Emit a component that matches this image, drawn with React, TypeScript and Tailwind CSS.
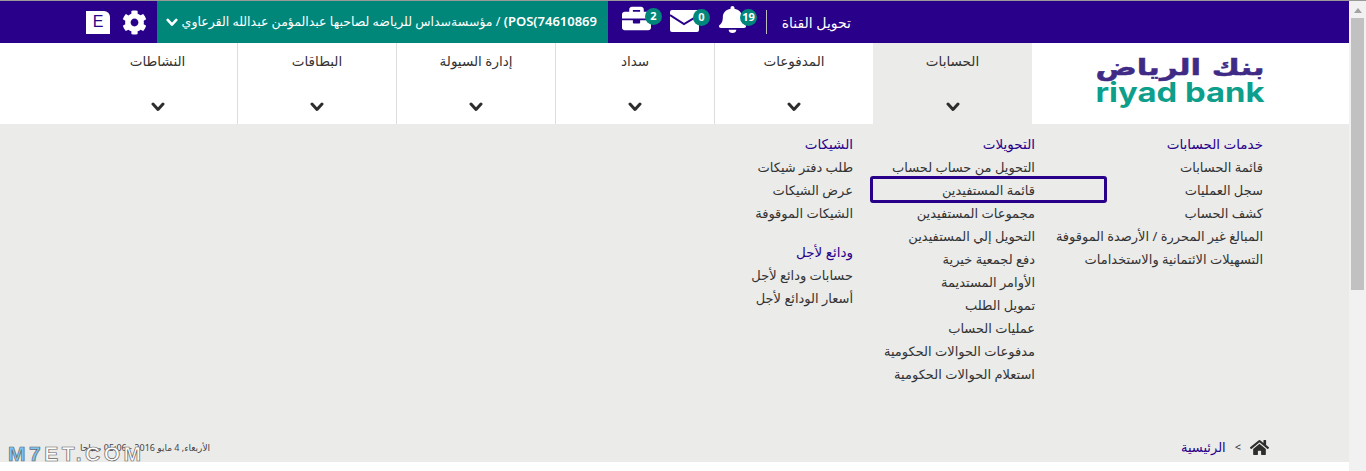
import { FaBell, FaBriefcase, FaCog, FaHome } from "react-icons/fa";

const navItems = ["الحسابات", "المدفوعات", "سداد", "إدارة السيولة", "البطاقات", "النشاطات"];

const accounts = ["قائمة الحسابات", "سجل العمليات", "كشف الحساب", "المبالغ غير المحررة / الأرصدة الموقوفة", "التسهيلات الائتمانية والاستخدامات"];
const transfers = ["التحويل من حساب لحساب", "قائمة المستفيدين", "مجموعات المستفيدين", "التحويل إلي المستفيدين", "دفع لجمعية خيرية", "الأوامر المستديمة", "تمويل الطلب", "عمليات الحساب", "مدفوعات الحوالات الحكومية", "استعلام الحوالات الحكومية"];
const cheques = ["طلب دفتر شيكات", "عرض الشيكات", "الشيكات الموقوفة"];
const deposits = ["حسابات ودائع لأجل", "أسعار الودائع لأجل"];

function Badge({ n, className }: { n: string; className: string }) {
  return (
    <span className={`absolute right-[-11px] flex h-[17px] w-[17px] items-center justify-center rounded-full bg-[#00877a] text-[11px] font-bold text-white ${className}`}>
      {n}
    </span>
  );
}

function Chevron({ className }: { className: string }) {
  return (
    <svg viewBox="0 0 14 10" className={className} fill="none" stroke="currentColor" strokeWidth="3" strokeLinecap="round" strokeLinejoin="round">
      <polyline points="2,2 7,7.5 12,2" />
    </svg>
  );
}

function Envelope() {
  return (
    <svg width="29" height="22" viewBox="0 0 29 22" className="block">
      <rect width="29" height="22" rx="2" fill="#fff" />
      <polyline points="0,5 14,14 29,5" fill="none" stroke="#29008a" strokeWidth="2" />
    </svg>
  );
}

function Group({ title, items, highlight }: { title: string; items: string[]; highlight?: string }) {
  return (
    <div>
      <div className="h-[24px] text-[13.5px] leading-[24px] text-[#29008a]">{title}</div>
      {items.map((t) => (
        <div key={t} className="relative h-[23px] whitespace-nowrap text-[13px] leading-[23px] text-[#333]">
          {t}
          {t === highlight && (
            <span className="absolute bottom-[-1px] left-[17px] right-[-72px] top-[-3px] rounded-[3px] border-[3px] border-[#29008a]" />
          )}
        </div>
      ))}
    </div>
  );
}

export default function App() {
  return (
    <div className="flex h-[471px] w-full overflow-hidden bg-white font-['Noto_Sans','DejaVu_Sans',sans-serif]" dir="ltr">
      <div className="flex w-[1349px] shrink-0 flex-col" dir="rtl">
        <div className="h-px bg-[#999]" />
        <header className="flex h-[42px] items-center bg-[#29008a] text-white">
          <div className="w-[498px] shrink-0" />
          <div className="w-[84px] shrink-0 text-[14px]">تحويل القناة</div>
          <div className="h-6 w-px shrink-0 bg-[#bbb]" />
          <div className="mr-[20px] flex shrink-0 items-center">
            <span className="relative mb-[5px]"><FaBell preserveAspectRatio="none" className="h-[27px] w-[27px]" /><Badge n="19" className="top-[3px]" /></span>
            <span className="relative mb-[2px] mr-[20px]"><Envelope /><Badge n="0" className="top-[-1px]" /></span>
            <span className="relative mb-[8px] mr-[19px]"><FaBriefcase preserveAspectRatio="none" className="h-[27px] w-[29px]" /><Badge n="2" className="top-[3px]" /></span>
          </div>
          <div className="mr-[14px] flex h-full w-[451px] shrink-0 items-center justify-between overflow-hidden bg-[#00877a] pl-[9px] pr-[11px] text-[12.5px]">
            <span className="whitespace-nowrap">
              <bdi dir="ltr" className="text-[13px] font-semibold">(POS(74610869</bdi> / مؤسسةسداس للرياضه لصاحبها عبدالمؤمن عبدالله القرعاوي
            </span>
            <Chevron className="h-[9px] w-[12px]" />
          </div>
          <FaCog className="mr-[10px] h-[25px] w-[25px] shrink-0" />
          <div className="mr-[12px] flex h-[23px] w-[24px] shrink-0 items-center justify-center rounded-tr-[6px] bg-white font-['Liberation_Sans'] text-[16px] text-[#29008a]">E</div>
        </header>
        <nav className="flex h-[81px]">
          <div className="flex w-[317px] shrink-0 items-start pr-[84px] pt-[11px]">
            <svg width="170" height="56" viewBox="0 0 170 56" dir="ltr" className="block">
              <text x="85" y="21" textAnchor="middle" textLength="169" lengthAdjust="spacingAndGlyphs" fontFamily="DejaVu Sans" fontWeight="700" fontSize="23" fill="#3f2a86" stroke="#3f2a86" strokeWidth="0.5">بنك الرياض</text>
              <text x="85" y="48" textAnchor="middle" textLength="169" lengthAdjust="spacingAndGlyphs" fontFamily="Inter" fontWeight="700" fontSize="27" fill="#0d9f8c">riyad bank</text>
            </svg>
          </div>
          {navItems.map((t, i) => (
            <div key={t} className={`flex w-[159px] flex-col items-center justify-between pb-[12px] pt-[8px] text-[13.5px] text-[#333] ${i === 0 ? "bg-[#ebebea]" : i < 5 ? "border-l border-[#ddd]" : ""}`}>
              <span>{t}</span>
              <Chevron className="h-[10px] w-[14px] text-[#2d2d2d]" />
            </div>
          ))}
        </nav>
        <main className="relative flex h-[338px] flex-col justify-between bg-[#ebebea] pb-[5px] pr-[80px] pt-[8px]">
          <div className="flex pr-[6px]">
            <div className="w-[228px] shrink-0"><Group title="خدمات الحسابات" items={accounts} /></div>
            <div className="w-[182px] shrink-0"><Group title="التحويلات" items={transfers} highlight="قائمة المستفيدين" /></div>
            <div className="flex flex-col gap-[15px]">
              <Group title="الشيكات" items={cheques} />
              <Group title="ودائع لأجل" items={deposits} />
            </div>
          </div>
          <div className="flex items-center justify-between pl-[80px]">
            <div className="flex shrink-0 items-center gap-[9px] whitespace-nowrap text-[13px] text-[#29008a]">
              <FaHome className="h-[17px] w-[19px] text-[#2d2d2d]" />
              <span className="text-[11px] text-[#333]">&gt;</span>
              <span>الرئيسية</span>
            </div>
            <div className="shrink-0 whitespace-nowrap text-[9px] text-[#444]">الأربعاء, 4 مايو 2016 - 05:06 صباحا</div>
          </div>
          <div dir="ltr" className="absolute bottom-[-2px] left-[8px] font-['Liberation_Sans'] text-[21px] font-bold leading-[21px] tracking-[3.5px] text-white [-webkit-text-stroke:0.7px_#666]">
            <span className="text-[#7cc4f0]">M7</span>ET.COM
          </div>
        </main>
      </div>
      <div className="flex w-[17px] flex-col items-center border-t border-[#999] bg-[#f1f1f1]">
        <div className="mt-[7px] h-0 w-0 border-x-[4px] border-b-[5px] border-x-transparent border-b-[#a3a3a3]" />
        <div className="mt-[5px] h-[272px] w-[13px] bg-[#c1c1c1]" />
      </div>
    </div>
  );
}
